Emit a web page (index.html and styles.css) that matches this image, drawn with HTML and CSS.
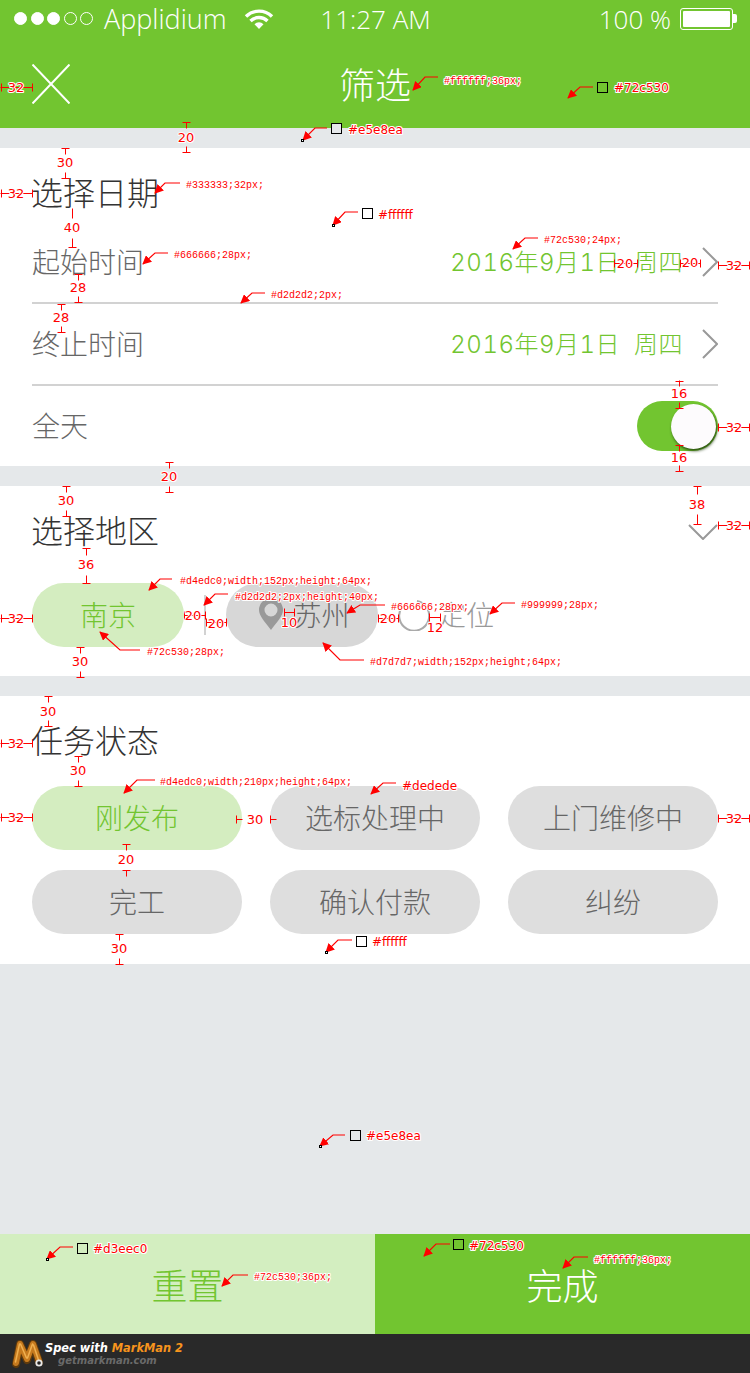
FILE: index.html
```html
<!DOCTYPE html>
<html lang="zh-CN">
<head>
  <meta charset="UTF-8" />
  <meta name="viewport" content="width=device-width, initial-scale=1.0" />
  <title>筛选</title>
  <link rel="stylesheet" href="styles.css">
</head>
<body>
  <div class="page">
    <header class="top">
      <div class="status">
        <div class="status-left">
          <span class="dots"><i class="on"></i><i class="on"></i><i class="on"></i><i></i><i></i></span>
          <span class="carrier">Applidium</span>
          <svg class="wifi" viewBox="0 0 30 20"><path d="M2 7.5a18.5 18.5 0 0 1 26 0M6.5 12a12.2 12.2 0 0 1 17 0" fill="none" stroke="#fff" stroke-width="3.4"/><path d="M10.5 15.2a6.4 6.4 0 0 1 9 0L15 20z" fill="#fff"/></svg>
        </div>
        <span class="clock">11:27 AM</span>
        <div class="status-right">
          <span class="percent">100 %</span>
          <span class="battery"><b></b></span><span class="nub"></span>
        </div>
      </div>
      <nav class="nav">
        <svg class="close" viewBox="0 0 38 40"><path d="M0.5 0.5L37.5 39.5M37.5 0.5L0.5 39.5" stroke="#fff" stroke-width="2" fill="none"/></svg>
        <h1>筛选</h1>
        <span></span>
      </nav>
    </header>

    <section class="card date">
      <h2>选择日期</h2>
      <div class="rows">
        <div class="row line">
          <span class="label">起始时间</span>
          <div class="value">
            <span>2016年9月1日</span><span>周四</span>
            <svg class="arrow" viewBox="0 0 16 30"><path d="M1 1L15 15L1 29" fill="none" stroke="#999" stroke-width="2"/></svg>
          </div>
        </div>
        <div class="row line">
          <span class="label">终止时间</span>
          <div class="value">
            <span>2016年9月1日</span><span>周四</span>
            <svg class="arrow" viewBox="0 0 16 30"><path d="M1 1L15 15L1 29" fill="none" stroke="#999" stroke-width="2"/></svg>
          </div>
        </div>
        <div class="row last">
          <span class="label">全天</span>
          <div class="toggle"><i></i></div>
        </div>
      </div>
    </section>

    <section class="card region">
      <div class="region-head">
        <h2>选择地区</h2>
        <svg class="down" viewBox="0 0 30 16"><path d="M1 1L15 15L29 1" fill="none" stroke="#999" stroke-width="2"/></svg>
      </div>
      <div class="cities">
        <span class="pill city active">南京</span>
        <span class="divider"></span>
        <span class="pill city gps">
          <svg class="pin" viewBox="0 0 24 32"><path fill-rule="evenodd" d="M12 0a12 12 0 0 1 12 12c0 6-6 12-12 20C6 24 0 18 0 12A12 12 0 0 1 12 0zm0 5.500a6.500 6.500 0 1 0 0 13 6.500 6.500 0 0 0 0-13z" fill="#999"/></svg>
          苏州
        </span>
        <svg class="spin" viewBox="0 0 32 32"><path d="M19 2A15 15 0 1 1 4 8" fill="none" stroke="#aaa" stroke-width="2"/></svg>
        <span class="locate">定位</span>
      </div>
    </section>

    <section class="card state">
      <h2>任务状态</h2>
      <div class="tasks">
        <span class="pill active">刚发布</span>
        <span class="pill">选标处理中</span>
        <span class="pill">上门维修中</span>
        <span class="pill">完工</span>
        <span class="pill">确认付款</span>
        <span class="pill">纠纷</span>
      </div>
    </section>

    <div class="spacer"></div>

    <footer class="actions">
      <button class="reset">重置</button>
      <button class="done">完成</button>
    </footer>

    <div class="brand">
      <svg class="logo" viewBox="0 0 32 28">
        <path d="M4 24L8 4L15 20L21 4L27 22" fill="none" stroke="#5f3a0c" stroke-width="8" stroke-linecap="round" stroke-linejoin="round"/>
        <path d="M4 23L8 4L15 19L21 4L27 21" fill="none" stroke="#c67a1e" stroke-width="6" stroke-linecap="round" stroke-linejoin="round"/>
        <path d="M3.500 22L7.500 4M14.500 18L8.500 4M15.500 18L20.500 4M21.500 5L26.500 20" fill="none" stroke="#f0b050" stroke-width="1.500" stroke-linecap="round"/>
        <circle cx="27" cy="23" r="3.600" fill="#e8e8e8"/><circle cx="27" cy="23" r="1.800" fill="#222"/>
      </svg>
      <div class="brand-text">
        <div class="spec">Spec with <em>MarkMan 2</em></div>
        <div class="site">getmarkman.com</div>
      </div>
    </div>

    <!-- markman annotations, laid over the whole screen -->
    <svg class="marks" viewBox="0 0 750 1373">
      <defs>
        <marker id="head" viewBox="0 0 10 10" refX="9" refY="5" markerWidth="9" markerHeight="9" markerUnits="userSpaceOnUse" orient="auto"><path d="M0 0L10 5L0 10z" fill="#f00"/></marker>
      </defs>

      <g class="dim">
        <path d="M0 87H32M1 83V91M32 83V91"/>
        <path d="M0 193H32M1 189V197M32 189V197"/>
        <path d="M614 263H637M614 259V267M637 259V267"/>
        <path d="M680 263H700M680 259V267M700 259V267"/>
        <path d="M718 265H750M718 261V269M749 261V269"/>
        <path d="M718 427H750M718 423V431M749 423V431"/>
        <path d="M718 525H750M718 521V529M749 521V529"/>
        <path d="M0 618H32M1 614V622M32 614V622"/>
        <path d="M184 615H205M184 611V619M205 611V619"/>
        <path d="M206 622H226M206 618V626M226 618V626"/>
        <path d="M284 612H294M284 608V616M294 608V616"/>
        <path d="M378 618H398M378 614V622M398 614V622"/>
        <path d="M429 617H440M429 613V621M440 613V621"/>
        <path d="M0 743H32M1 739V747M32 739V747"/>
        <path d="M0 817H32M1 813V821M32 813V821"/>
        <path d="M236 819H242M236 815V823M270 819H276M270 815V823"/>
        <path d="M718 818H750M718 814V822M749 814V822"/>

        <path d="M186 122V128M182 122H190M186 146V152M182 152H190"/>
        <path d="M65 148V154M61 148H69M65 172V178M61 178H69"/>
        <path d="M72 208V218M72 238V247M68 247H76"/>
        <path d="M78 274V280M74 274H82M78 296V302M74 302H82"/>
        <path d="M61 304V310M57 304H65M61 326V332M57 332H65"/>
        <path d="M679 380V386M675 381H683M679 402V408M675 408H683"/>
        <path d="M679 445V451M675 445H683M679 465V471M675 471H683"/>
        <path d="M169 462V468M165 462H173M169 486V492M165 492H173"/>
        <path d="M66 486V492M62 486H70M66 510V516M62 516H70"/>
        <path d="M86 548V555M82 548H90M86 575V583M82 583H90"/>
        <path d="M80 647V653M76 647H84M80 671V677M76 677H84"/>
        <path d="M48 696V702M44 696H52M48 720V726M44 726H52"/>
        <path d="M78 756V762M74 756H82M78 780V786M74 786H82"/>
        <path d="M126 844V850M122 844H130M126 870V876M122 870H130"/>
        <path d="M119 934V940M115 934H123M119 958V964M115 964H123"/>
        <path d="M697 486V494M693 486H701M697 514V524M693 524H701"/>
      </g>

      <g class="num">
        <text x="16" y="92">32</text>
        <text x="16" y="198">32</text>
        <text x="625" y="268">20</text>
        <text x="690" y="267">20</text>
        <text x="734" y="270">32</text>
        <text x="734" y="432">32</text>
        <text x="734" y="530">32</text>
        <text x="16" y="623">32</text>
        <text x="193" y="620">20</text>
        <text x="216" y="628">20</text>
        <text x="289" y="627">10</text>
        <text x="388" y="623">20</text>
        <text x="435" y="632">12</text>
        <text x="16" y="748">32</text>
        <text x="16" y="822">32</text>
        <text x="255" y="824">30</text>
        <text x="734" y="823">32</text>
        <text x="186" y="142">20</text>
        <text x="65" y="167">30</text>
        <text x="72" y="232">40</text>
        <text x="78" y="292">28</text>
        <text x="61" y="322">28</text>
        <text x="679" y="398">16</text>
        <text x="679" y="462">16</text>
        <text x="169" y="481">20</text>
        <text x="66" y="505">30</text>
        <text x="86" y="569">36</text>
        <text x="80" y="666">30</text>
        <text x="48" y="716">30</text>
        <text x="78" y="775">30</text>
        <text x="126" y="864">20</text>
        <text x="119" y="953">30</text>
        <text x="697" y="509">38</text>
      </g>

      <g class="lead">
        <path d="M438 77H425L413 90"/>
        <path d="M593 87H580L568 98"/>
        <path d="M327 128H315L303 140"/>
        <path d="M180 183H165L155 193"/>
        <path d="M358 212H345L333 225"/>
        <path d="M168 253H155L143 264"/>
        <path d="M538 238H525L513 249"/>
        <path d="M265 293H252L241 303"/>
        <path d="M172 579H160L149 590"/>
        <path d="M228 594H215L204 605"/>
        <path d="M385 605H360L347 613"/>
        <path d="M515 603H502L490 614"/>
        <path d="M140 650H120L100 632"/>
        <path d="M364 660H340L323 643"/>
        <path d="M155 780H137L124 793"/>
        <path d="M396 783H383L371 794"/>
        <path d="M352 940H338L326 952"/>
        <path d="M345 1135H333L320 1146"/>
        <path d="M73 1247H60L47 1259"/>
        <path d="M248 1275H233L222 1286"/>
        <path d="M450 1244H436L424 1256"/>
        <path d="M588 1257H574L563 1268"/>
      </g>

      <g class="swatch">
        <rect x="597.500" y="82.500" width="10" height="10" fill="#72c530"/>
        <rect x="331.500" y="123.500" width="10" height="10" fill="#e5e8ea"/>
        <rect x="362.500" y="208.500" width="10" height="10" fill="#fff"/>
        <rect x="356.500" y="936.500" width="10" height="10" fill="#fff"/>
        <rect x="350.500" y="1130.500" width="10" height="10" fill="#e5e8ea"/>
        <rect x="77.500" y="1243.500" width="10" height="10" fill="#d3eec0"/>
        <rect x="453.500" y="1239.500" width="10" height="10" fill="#72c530"/>
        <rect x="301.500" y="139.500" width="2" height="2" fill="#fff"/>
        <rect x="332.500" y="224.500" width="2" height="2" fill="#fff"/>
        <rect x="325.500" y="951.500" width="2" height="2" fill="#fff"/>
        <rect x="319.500" y="1145.500" width="2" height="2" fill="#fff"/>
        <rect x="46.500" y="1258.500" width="2" height="2" fill="#fff"/>
      </g>

      <g class="hex">
        <text x="614" y="92">#72c530</text>
        <text x="348" y="134">#e5e8ea</text>
        <text x="378" y="219">#ffffff</text>
        <text x="372" y="946">#ffffff</text>
        <text x="366" y="1140">#e5e8ea</text>
        <text x="93" y="1253">#d3eec0</text>
        <text x="469" y="1250">#72c530</text>
        <text x="402" y="790">#dedede</text>
      </g>

      <g class="spec-note">
        <text x="444" y="84">#ffffff;36px;</text>
        <text x="186" y="188">#333333;32px;</text>
        <text x="174" y="258">#666666;28px;</text>
        <text x="544" y="243">#72c530;24px;</text>
        <text x="271" y="298">#d2d2d2;2px;</text>
        <text x="180" y="584">#d4edc0;width;152px;height;64px;</text>
        <text x="235" y="600">#d2d2d2;2px;height;40px;</text>
        <text x="391" y="610">#666666;28px;</text>
        <text x="521" y="608">#999999;28px;</text>
        <text x="147" y="655">#72c530;28px;</text>
        <text x="370" y="665">#d7d7d7;width;152px;height;64px;</text>
        <text x="160" y="785">#d4edc0;width;210px;height;64px;</text>
        <text x="254" y="1280">#72c530;36px;</text>
        <text x="594" y="1263">#ffffff;36px;</text>
      </g>
    </svg>
  </div>
</body>
</html>
```

FILE: styles.css
```css
* {
  box-sizing: border-box;
}
body {
  margin: 0;
  font-family: "Noto Sans CJK SC", "Noto Sans", sans-serif;
  font-weight: 300;
  background: #e5e8ea;
}
h1, h2 {
  margin: 0;
  font-weight: 300;
}
.page {
  position: relative;
  width: 750px;
  height: 1373px;
  overflow: hidden;
  display: flex;
  flex-direction: column;
}

/* top bar */
.top {
  height: 128px;
  background: #72c530;
  color: #fff;
}
.status {
  height: 40px;
  padding: 0 13px 3px 14px;
  display: grid;
  grid-template-columns: 1fr auto 1fr;
  align-items: center;
  font-family: "Open Sans", sans-serif;
  font-weight: 300;
  font-size: 26px;
}
.status-left, .status-right {
  display: flex;
  align-items: center;
}
.status-right {
  justify-content: flex-end;
}
.dots {
  display: flex;
  gap: 3.500px;
}
.dots i {
  width: 13px;
  height: 13px;
  border: 1px solid #fff;
  border-radius: 50%;
}
.dots i.on {
  background: #fff;
}
.carrier {
  margin-left: 11px;
  font-size: 27px;
}
.wifi {
  width: 30px;
  height: 20px;
  margin-left: 17px;
}
.percent {
  margin-right: 9px;
}
.battery {
  width: 53px;
  height: 22px;
  padding: 2px;
  border: 1px solid #fff;
  border-radius: 3px;
}
.battery b {
  display: block;
  height: 100%;
  background: #fff;
  border-radius: 1px;
}
.nub {
  width: 4px;
  height: 9px;
  background: #fff;
  border-radius: 0 2px 2px 0;
}
.nav {
  height: 88px;
  padding: 0 32px;
  display: grid;
  grid-template-columns: 1fr auto 1fr;
  align-items: center;
}
.close {
  width: 38px;
  height: 40px;
}
.nav h1 {
  font-size: 36px;
  line-height: 40px;
  padding-bottom: 2px;
}

/* white sections */
.card {
  background: #fff;
  margin-top: 20px;
  padding: 27px 32px 0;
}
.card h2 {
  font-size: 32px;
  line-height: 32px;
  margin-left: -1px;
  color: #333;
}
.date {
  height: 318px;
}
.rows {
  margin-top: 15px;
}
.row {
  height: 82px;
  display: flex;
  align-items: center;
  justify-content: space-between;
}
.row.line {
  border-bottom: 2px solid #d2d2d2;
}
.row.last {
  height: 80px;
}
.label {
  font-size: 28px;
  padding-bottom: 2px;
  color: #666;
}
.value {
  display: flex;
  align-items: center;
  gap: 14px;
  font-family: Inter, "Noto Sans CJK SC", sans-serif;
  font-size: 24px;
  font-variant-numeric: tabular-nums;
  letter-spacing: 0.5px;
  color: #72c530;
}
.value span {
  padding-bottom: 4px;
}
.arrow {
  width: 16px;
  height: 30px;
  margin-left: 5px;
}
.toggle {
  width: 81px;
  height: 50px;
  background: #72c530;
  border-radius: 25px;
  display: flex;
  align-items: center;
  justify-content: flex-end;
  padding-right: 2px;
}
.toggle i {
  width: 45px;
  height: 45px;
  background: #fdfbfd;
  border-radius: 50%;
  box-shadow: 1px 2px 3px rgba(30, 60, 10, 0.85);
}

/* pills */
.pill {
  height: 64px;
  padding-bottom: 2px;
  border-radius: 32px;
  background: #dedede;
  color: #666;
  font-size: 28px;
  display: flex;
  align-items: center;
  justify-content: center;
}
.pill.active {
  background: #d4edc0;
  color: #72c530;
}

.region {
  height: 190px;
}
.region-head {
  display: flex;
  align-items: center;
  justify-content: space-between;
}
.down {
  width: 30px;
  height: 16px;
  margin-top: 6px;
}
.cities {
  margin-top: 38px;
  display: flex;
  align-items: center;
}
.city {
  width: 152px;
}
.gps {
  background: #d7d7d7;
  gap: 10px;
  padding-left: 5px;
}
.pin {
  width: 24px;
  height: 32px;
}
.divider {
  width: 2px;
  height: 40px;
  margin: 0 20px;
  background: #d2d2d2;
}
.spin {
  width: 32px;
  height: 32px;
  margin-left: 20px;
}
.locate {
  margin-left: 8px;
  padding-bottom: 2px;
  font-size: 28px;
  color: #999;
}

.state {
  height: 268px;
}
.tasks {
  margin-top: 31px;
  display: grid;
  grid-template-columns: repeat(3, 210px);
  column-gap: 28px;
  row-gap: 20px;
}
.spacer {
  flex: 1;
}

/* bottom buttons */
.actions {
  height: 100px;
  display: flex;
}
.actions button {
  width: 50%;
  border: none;
  font-family: inherit;
  font-weight: 300;
  font-size: 36px;
  cursor: pointer;
}
.reset {
  background: #d3eec0;
  color: #72c530;
}
.done {
  background: #72c530;
  color: #fff;
}

/* markman footer */
.brand {
  height: 39px;
  background: #292929;
  padding-left: 12px;
  display: flex;
  align-items: center;
  font-family: "DejaVu Sans", sans-serif;
  font-weight: 700;
  font-style: italic;
}
.logo {
  width: 32px;
  height: 28px;
}
.brand-text {
  margin-left: 1px;
}
.spec {
  font-size: 11.400px;
  line-height: 14px;
  color: #fff;
}
.spec em {
  color: #f7941d;
}
.site {
  margin-left: 13px;
  font-size: 10px;
  line-height: 12px;
  color: #6a6a6a;
}

/* annotation layer */
.marks {
  position: absolute;
  top: 0;
  left: 0;
  width: 750px;
  height: 1373px;
  font-weight: 400;
}
.dim {
  transform: translate(0.5px, 0.5px);
}
.dim path {
  fill: none;
  stroke: #f00;
  stroke-width: 1;
}
.lead path {
  fill: none;
  stroke: #f00;
  stroke-width: 1.200;
  marker-end: url(#head);
}
.swatch rect {
  stroke: #000;
  stroke-width: 1;
}
.num text, .hex text, .spec-note text {
  fill: #f00;
  stroke: #fff;
  paint-order: stroke;
  stroke-linejoin: round;
}
.num text {
  font-family: "DejaVu Sans", sans-serif;
  font-size: 13px;
  text-anchor: middle;
  stroke-width: 2px;
}
.hex text {
  font-family: "DejaVu Sans", sans-serif;
  font-size: 12px;
  stroke-width: 2px;
}
.spec-note text {
  font-family: "Liberation Mono", monospace;
  font-size: 10px;
  stroke-width: 2px;
}
```
